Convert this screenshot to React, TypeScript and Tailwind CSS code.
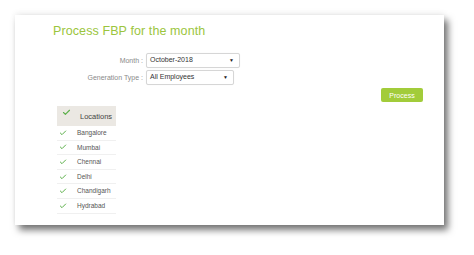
import { Check } from "lucide-react";

const locations = ["Bangalore", "Mumbai", "Chennai", "Delhi", "Chandigarh", "Hydrabad"];

function SelectBox({ value, width }: { value: string; width: string }) {
    return (
        <div className={`${width} h-[15px] flex items-center justify-between pl-[3px] pr-[5px] border border-[#d6d6d6] rounded-[2px] bg-white shadow-[0_0_1px_rgba(0,0,0,0.08)]`}>
            <span className="text-[7px] text-[#333]">{value}</span>
            <span className="text-[5px] text-[#222] leading-none">▼</span>
        </div>
    );
}

export default function App() {
    return (
        <div className="w-[474px] h-[255px] bg-white pt-[15px] pl-[15px] font-['Liberation_Sans',Arial,sans-serif]">
            <div className="w-[429px] h-[210px] bg-white shadow-[4px_5px_7px_rgba(0,0,0,0.55),0_-2px_6px_rgba(0,0,0,0.06)] pl-[38px] pt-[9px]">
                <h1 className="text-[12.5px] leading-[15px] text-[#9bc53d] tracking-[0.1px]">Process FBP for the month</h1>
                <div className="mt-[14px] flex flex-col gap-[2px]">
                    <div className="flex items-center">
                        <span className="w-[93px] text-right pr-[3px] text-[7px] text-[#8a8a8a] mt-[1px]">Month :</span>
                        <SelectBox value="October-2018" width="w-[94px]" />
                    </div>
                    <div className="flex items-center">
                        <span className="w-[93px] text-right pr-[3px] text-[7px] text-[#8a8a8a] mt-[1px]">Generation Type :</span>
                        <SelectBox value="All Employees" width="w-[88px]" />
                    </div>
                </div>
                <div className="flex justify-end pr-[21px] mt-[3px]">
                    <button className="w-[42px] h-[14px] rounded-[2px] bg-[#a2cc3a] text-white text-[7px] leading-none">Process</button>
                </div>
                <div className="w-[59px] ml-[4px] mt-[4px]">
                    <div className="h-[20px] bg-[#ebe8e3] flex items-center">
                        <Check className="w-[9px] h-[9px] text-[#5cb04a] ml-[5px] -mt-[7px]" strokeWidth={3} />
                        <span className="ml-[9px] text-[7.5px] text-[#444] mt-[1px]">Locations</span>
                    </div>
                    {locations.map((loc) => (
                        <div key={loc} className="h-[14.6px] flex items-center border-b border-[#f0f0f0]">
                            <Check className="w-[8px] h-[8px] text-[#5cb04a] ml-[2px]" strokeWidth={3} />
                            <span className="ml-[10px] text-[6.5px] text-[#555]">{loc}</span>
                        </div>
                    ))}
                </div>
            </div>
        </div>
    );
}
